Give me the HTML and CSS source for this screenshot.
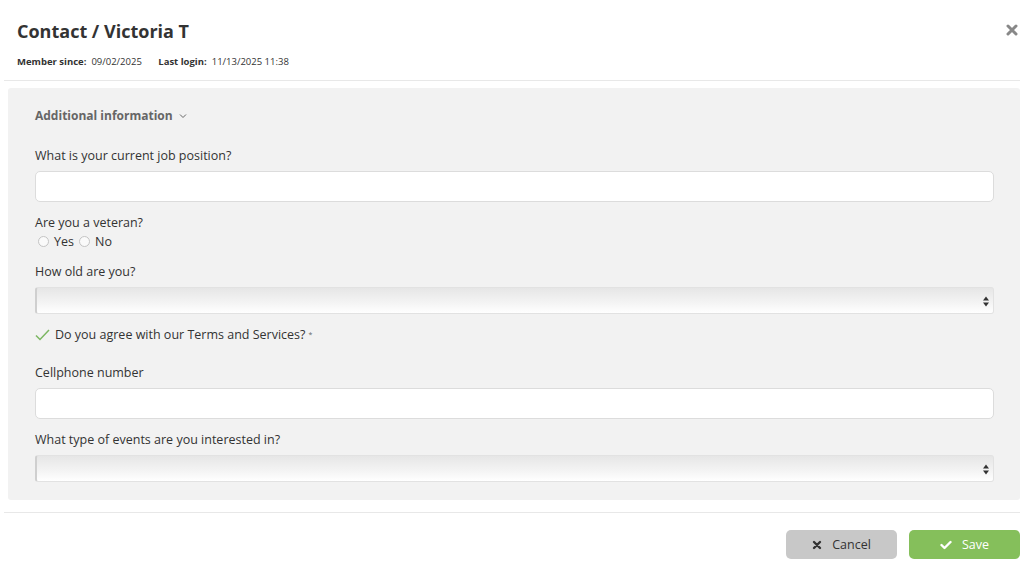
FILE: index.html
```html
<!DOCTYPE html>
<html>
<head>
<meta charset="utf-8">
<link rel="stylesheet" href="styles.css">
</head>
<body>
<div class="modal">
  <header class="head">
    <div class="head-text">
      <h1 class="title">Contact / Victoria T</h1>
      <div class="meta">
        <span class="meta-label">Member since:</span><span class="meta-val">09/02/2025</span>
        <span class="meta-label">Last login:</span><span class="meta-val">11/13/2025 11:38</span>
      </div>
    </div>
    <button class="close" aria-label="Close">
      <svg width="12" height="12" viewBox="0 0 12 12"><path d="M2 2 L10 10 M10 2 L2 10" stroke="#888" stroke-width="3" stroke-linecap="round"/></svg>
    </button>
  </header>
  <div class="body">
    <section class="panel">
      <div class="section-title">Additional information
        <svg class="chev" width="8" height="6" viewBox="0 0 8 6"><path d="M1 1.5 L4 4.5 L7 1.5" fill="none" stroke="#666" stroke-width="1"/></svg>
      </div>
      <div class="field">
        <label class="label">What is your current job position?</label>
        <input class="input" type="text">
      </div>
      <div class="field field-radio">
        <label class="label">Are you a veteran?</label>
        <div class="radios">
          <span class="radio"><span class="circle"></span>Yes</span>
          <span class="radio"><span class="circle"></span>No</span>
        </div>
      </div>
      <div class="field">
        <label class="label">How old are you?</label>
        <div class="select">
          <svg class="arrows" width="6" height="11" viewBox="0 0 6 11"><path d="M3 0.5 L6 4.5 L0 4.5 Z M0 6.5 L6 6.5 L3 10.5 Z" fill="#333"/></svg>
        </div>
      </div>
      <div class="check-row">
        <svg width="15" height="12" viewBox="0 0 15 12"><path d="M1 6.5 L5 10.5 L14 1" fill="none" stroke="#7bb661" stroke-width="1.5"/></svg>
        <span>Do you agree with our Terms and Services?</span><sup class="req">*</sup>
      </div>
      <div class="field">
        <label class="label">Cellphone number</label>
        <input class="input" type="text">
      </div>
      <div class="field">
        <label class="label">What type of events are you interested in?</label>
        <div class="select">
          <svg class="arrows" width="6" height="11" viewBox="0 0 6 11"><path d="M3 0.5 L6 4.5 L0 4.5 Z M0 6.5 L6 6.5 L3 10.5 Z" fill="#333"/></svg>
        </div>
      </div>
    </section>
  </div>
  <footer class="foot">
    <button class="btn btn-cancel">
      <svg width="10" height="10" viewBox="0 0 10 10"><path d="M2 2 L8 8 M8 2 L2 8" stroke="#333" stroke-width="2.4" stroke-linecap="round"/></svg>
      Cancel
    </button>
    <button class="btn btn-save">
      <svg width="12" height="10" viewBox="0 0 12 10"><path d="M1.5 5 L4.5 8 L10.5 2" fill="none" stroke="#fff" stroke-width="2.4" stroke-linecap="round" stroke-linejoin="round"/></svg>
      Save
    </button>
  </footer>
</div>
</body>
</html>
```
FILE: styles.css
```css
* { box-sizing: border-box; }
html, body { margin: 0; padding: 0; background: #fff; }
body { font-family: "Open Sans", "Noto Sans", sans-serif; color: #333; width: 1024px; height: 565px; overflow: hidden; }
.modal { display: flex; flex-direction: column; }
.head { display: flex; justify-content: space-between; align-items: flex-start; padding: 19px 1px 0 13px; height: 81px; border-bottom: 1px solid #e8e8e8; margin: 0 4px; }
.title { margin: 0; font-size: 18px; font-weight: 700; color: #333; line-height: 24px; }
.meta { margin-top: 13px; font-size: 9.5px; line-height: 12px; color: #333; }
.meta-label { font-weight: 700; margin-right: 5px; }
.meta-val { margin-right: 14px; }
.close { background: none; border: 0; padding: 0; margin-top: 5px; width: 14px; height: 14px; cursor: pointer; }
.body { padding: 7px 4px 0 8px; }
.panel { background: #f2f2f2; border-radius: 3px; padding: 20px 26px 18px 27px; height: 412px; }
.section-title { font-size: 12px; font-weight: 700; color: #666; line-height: 16px; display: flex; align-items: center; gap: 6px; margin-bottom: 23px; }
.field { display: flex; flex-direction: column; margin-bottom: 12px; }
.label { font-size: 12.5px; line-height: 17px; color: #333; margin-bottom: 7px; }
.input { height: 31px; border: 1px solid #dcdcdc; border-radius: 5px; background: #fff; width: 100%; }
.field-radio { margin-bottom: 13px; }
.field-radio .label { margin-bottom: 2px; }
.radios { display: flex; gap: 5px; font-size: 12.5px; line-height: 17px; padding-left: 3px; }
.radio { display: flex; align-items: center; gap: 5px; }
.circle { width: 11px; height: 11px; border: 1px solid #c4c4c4; border-radius: 50%; background: #fafafa; }
.select { position: relative; height: 27px; border: 1px solid #e2e2e2; border-left: 2px solid #cfcfcf; border-radius: 3px; background: linear-gradient(#e6e6e6, #f4f4f4 60%, #fff); width: 100%; }
.arrows { position: absolute; right: 4px; top: 8px; }
.check-row { display: flex; align-items: center; gap: 5px; font-size: 12.5px; line-height: 17px; margin: 9px 0 21px 0; }
.req { font-size: 7px; color: #666; align-self: flex-start; margin-left: -2px; }
.foot { margin: 12px 4px 0 4px; border-top: 1px solid #e8e8e8; display: flex; justify-content: flex-end; gap: 12px; padding-top: 17px; }
.btn { width: 111px; height: 29px; border-radius: 5px; border: 0; font-family: inherit; font-size: 12.5px; display: flex; align-items: center; justify-content: center; gap: 10px; }
.btn-cancel { background: #c8c8c8; color: #333; }
.btn-save { background: #85bf5b; color: #fff; }
```
